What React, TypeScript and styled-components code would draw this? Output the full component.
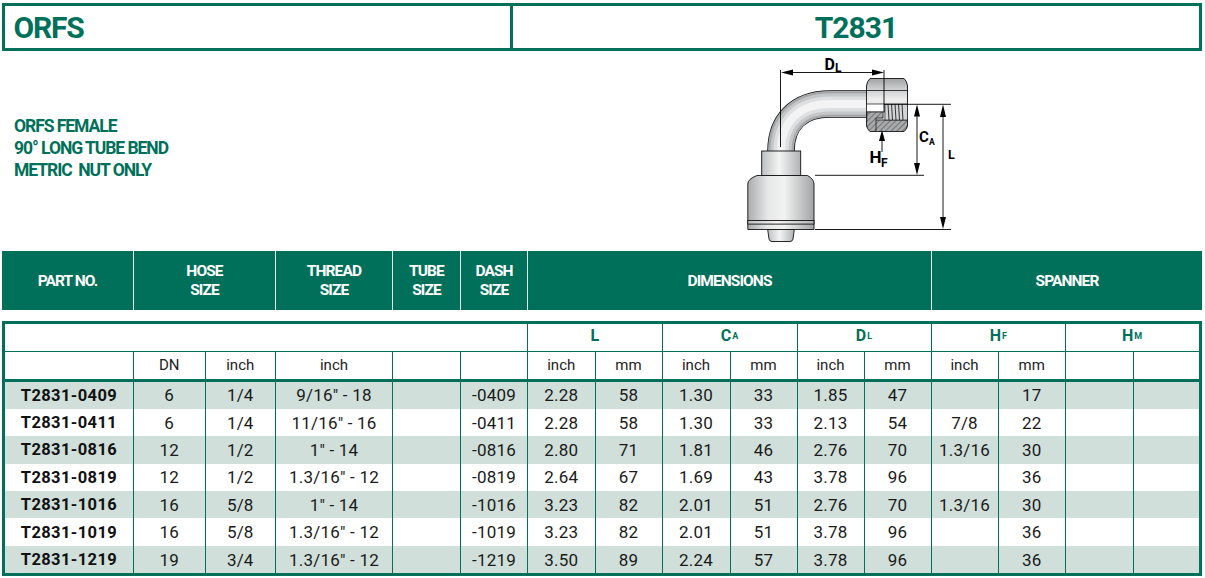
import * as React from "react";
import styled, { createGlobalStyle } from "styled-components";

const GREEN = "#00705a";
const FONT = `Roboto, "Liberation Sans", sans-serif`;

const rows = [
  ["T2831-0409", "6", "1/4", '9/16" - 18', "", "-0409", "2.28", "58", "1.30", "33", "1.85", "47", "", "17", "", ""],
  ["T2831-0411", "6", "1/4", '11/16" - 16', "", "-0411", "2.28", "58", "1.30", "33", "2.13", "54", "7/8", "22", "", ""],
  ["T2831-0816", "12", "1/2", '1" - 14', "", "-0816", "2.80", "71", "1.81", "46", "2.76", "70", "1.3/16", "30", "", ""],
  ["T2831-0819", "12", "1/2", '1.3/16" - 12', "", "-0819", "2.64", "67", "1.69", "43", "3.78", "96", "", "36", "", ""],
  ["T2831-1016", "16", "5/8", '1" - 14', "", "-1016", "3.23", "82", "2.01", "51", "2.76", "70", "1.3/16", "30", "", ""],
  ["T2831-1019", "16", "5/8", '1.3/16" - 12', "", "-1019", "3.23", "82", "2.01", "51", "3.78", "96", "", "36", "", ""],
  ["T2831-1219", "19", "3/4", '1.3/16" - 12', "", "-1219", "3.50", "89", "2.24", "57", "3.78", "96", "", "36", "", ""],
];

const units = ["", "DN", "inch", "inch", "", "", "inch", "mm", "inch", "mm", "inch", "mm", "inch", "mm", "", ""];

const TUBE = "M167 54H130C97 54 81 74 81 101";

const FittingDrawing = () => (
  <svg width="280" height="200" viewBox="0 0 280 200">
    <defs>
      <linearGradient id="body" x1="0" x2="1" y1="0" y2="0">
        <stop offset="0" stopColor="#a9abad" />
        <stop offset="0.3" stopColor="#e6e7e8" />
        <stop offset="0.55" stopColor="#f2f2f2" />
        <stop offset="1" stopColor="#a2a4a6" />
      </linearGradient>
      <linearGradient id="collar" x1="0" x2="1" y1="0" y2="0">
        <stop offset="0" stopColor="#bcbec0" />
        <stop offset="0.45" stopColor="#f4f4f4" />
        <stop offset="1" stopColor="#b0b2b4" />
      </linearGradient>
      <linearGradient id="nut" x1="0" x2="0" y1="0" y2="1">
        <stop offset="0" stopColor="#a0a2a4" />
        <stop offset="0.18" stopColor="#c8cacb" />
        <stop offset="0.4" stopColor="#eeeeee" />
        <stop offset="1" stopColor="#b8babc" />
      </linearGradient>
      <pattern id="hatch" width="4" height="4" patternUnits="userSpaceOnUse" patternTransform="rotate(45)">
        <rect width="4" height="4" fill="#a8aaac" />
        <line x1="0" y1="0" x2="0" y2="4" stroke="#222" strokeWidth="0.8" />
      </pattern>
    </defs>

    {/* bent tube, shaded with nested strokes */}
    <path d={TUBE} fill="none" stroke="#111" strokeWidth="27.5" />
    <path d={TUBE} fill="none" stroke="#a6a8aa" strokeWidth="26" />
    <path d={TUBE} fill="none" stroke="#c4c6c7" strokeWidth="21" />
    <path d={TUBE} fill="none" stroke="#dedfe0" strokeWidth="15" />
    <path d={TUBE} fill="none" stroke="#f3f3f3" strokeWidth="8" />

    {/* collar and socket */}
    <rect x="61.7" y="101" width="39" height="24.5" fill="url(#collar)" stroke="#111" strokeWidth="0.9" />
    <path d="M57 125.5H107.5Q114 129 114 134V179.5H47.8V134Q47.8 129 57 125.5Z" fill="url(#body)" stroke="#111" strokeWidth="0.9" />
    <rect x="47.8" y="170.5" width="66.2" height="3.6" fill="url(#collar)" stroke="#111" strokeWidth="0.9" />
    <path d="M67.7 179.5H94.3L93 189Q92.5 191.5 90 191.5H72Q69.5 191.5 69 189Z" fill="url(#collar)" stroke="#111" strokeWidth="0.9" />

    {/* nut */}
    <path d="M170 28.5H204Q207 31 207.5 36V75Q207 79 204 81.5H170Q167 79 166.5 75V36Q167 31 170 28.5Z" fill="url(#nut)" stroke="#111" strokeWidth="0.9" />
    <path d="M166.5 40.5H207.5" stroke="#111" strokeWidth="0.8" />
    <path d="M166.5 54H185V62H166.5Z" fill="#fff" stroke="#111" strokeWidth="0.7" />
    <path d="M167 62H183V68H176V70.5H185V81.5H170Q167 79 166.5 75Z" fill="url(#hatch)" stroke="#111" strokeWidth="0.7" />
    <path d="M176 70H207.5V75Q207 79 204 81.5H176Z" fill="url(#hatch)" stroke="#111" strokeWidth="0.7" />
    <path d="M185 54H207.5V70H185Z" fill="#d2d4d5" stroke="#111" strokeWidth="0.6" />
    <path d="M188 54L189 70M191.5 54L192.5 70M195 54L196 70M198.5 54L199.5 70M202 54L203 70" stroke="#222" strokeWidth="0.9" />

    {/* dimension lines */}
    <g stroke="#000" strokeWidth="0.9" fill="none">
      <path d="M80.5 20V97M184 20V62M92 22.5H172" />
      <path d="M184 54.3H251M115 125.3H224M115 179.5H251" />
      <path d="M217 66V114M243 66V168M182 90V102" />
    </g>
    <g fill="#000">
      <path d="M81 22.5L93 19.5V25.5Z" />
      <path d="M184 22.5L172 19.5V25.5Z" />
      <path d="M217 54.5L214 66.5H220Z" />
      <path d="M217 125L214 113H220Z" />
      <path d="M243 54.5L240 67H246Z" />
      <path d="M243 179L240 167H246Z" />
      <path d="M182 80L179 91H185Z" />
    </g>
    <DrawLabel x="124.5" y="19.5" fontSize="16">D</DrawLabel>
    <DrawLabel x="135" y="21.5" fontSize="12">L</DrawLabel>
    <DrawLabel x="219" y="92" fontSize="15">C</DrawLabel>
    <DrawLabel x="229" y="95" fontSize="8.5">A</DrawLabel>
    <DrawLabel x="248" y="109" fontSize="12.5">L</DrawLabel>
    <DrawLabel x="169.5" y="113" fontSize="17">H</DrawLabel>
    <DrawLabel x="181" y="116.5" fontSize="12">F</DrawLabel>
  </svg>
);

const App = () => (
  <Page>
    <GlobalStyle />
    <TitleBar>
      <SeriesName>ORFS</SeriesName>
      <PartName>T2831</PartName>
    </TitleBar>

    <Intro>
      <Description>
        ORFS FEMALE
        <br />
        90° LONG TUBE BEND
        <br />
        METRIC&nbsp; NUT ONLY
      </Description>
      <Figure>
        <FittingDrawing />
      </Figure>
    </Intro>

    <HeaderBand>
      <HeaderCell>PART NO.</HeaderCell>
      <HeaderCell>HOSE<br />SIZE</HeaderCell>
      <HeaderCell>THREAD<br />SIZE</HeaderCell>
      <HeaderCell>TUBE<br />SIZE</HeaderCell>
      <HeaderCell>DASH<br />SIZE</HeaderCell>
      <HeaderCell>DIMENSIONS</HeaderCell>
      <HeaderCell>SPANNER</HeaderCell>
    </HeaderBand>

    <DataBox>
      <Row>
        <Cell $span={6} />
        <GroupCell>L</GroupCell>
        <GroupCell>C<sub>A</sub></GroupCell>
        <GroupCell>D<sub>L</sub></GroupCell>
        <GroupCell>H<sub>F</sub></GroupCell>
        <GroupCell>H<sub>M</sub></GroupCell>
      </Row>
      <UnitRow>
        {units.map((unit, i) => (
          <Cell key={i}>{unit}</Cell>
        ))}
      </UnitRow>
      {rows.map((row, r) => (
        <DataRow key={row[0]} $striped={r % 2 === 0}>
          {row.map((value, i) =>
            i === 0 ? <PartCell key={i}>{value}</PartCell> : <Cell key={i}>{value}</Cell>
          )}
        </DataRow>
      ))}
    </DataBox>
  </Page>
);

const GlobalStyle = createGlobalStyle`
  html, body {
    margin: 0;
    background: #fff;
  }
`;

const Page = styled.div`
  width: 1205px;
  height: 578px;
  box-sizing: border-box;
  padding: 2.5px 3px 0 2px;
  overflow: hidden;
  font-family: ${FONT};
`;

const TitleBar = styled.div`
  display: grid;
  grid-template-columns: 505px 1fr;
  height: 48.5px;
  box-sizing: border-box;
  border: 3.5px solid ${GREEN};
  color: ${GREEN};
  font-size: 30px;
  font-weight: 700;
`;

const SeriesName = styled.div`
  display: flex;
  align-items: center;
  padding: 2px 0 0 8.5px;
  letter-spacing: -1.2px;
`;

const PartName = styled.div`
  display: flex;
  align-items: center;
  justify-content: center;
  padding-top: 2px;
  border-left: 3px solid ${GREEN};
  letter-spacing: -1px;
`;

const Intro = styled.div`
  display: flex;
  height: 199.5px;
`;

const Description = styled.div`
  width: 698px;
  box-sizing: border-box;
  padding: 64px 0 0 12px;
  color: ${GREEN};
  font-size: 17.5px;
  font-weight: 700;
  line-height: 22px;
  letter-spacing: -1.05px;
`;

const Figure = styled.div`
  flex: none;
  height: 200px;
  margin-top: -1px;
`;

const DrawLabel = styled.text`
  font-family: ${FONT};
  font-weight: 700;
  fill: #000;
`;

const HeaderBand = styled.div`
  display: grid;
  grid-template-columns: 131px 142px 117px 68px 67px 404px 271px;
  height: 59px;
  background: ${GREEN};
`;

const HeaderCell = styled.div`
  display: flex;
  align-items: center;
  justify-content: center;
  padding-top: 2px;
  text-align: center;
  border-left: 1px solid #e4eeea;
  color: #fff;
  font-size: 15.5px;
  font-weight: 700;
  line-height: 19px;
  letter-spacing: -0.9px;

  &:first-child {
    border-left: 0;
  }
`;

const DataBox = styled.div`
  margin-top: 11.5px;
  border: 3.5px solid ${GREEN};
  border-bottom-width: 3px;
`;

const columns =
  "128px 71.5px 70.5px 117px 68px 67px 67.5px 67px 68px 67px 67px 67px 67px 67.5px 67.5px 65.5px";

const Row = styled.div`
  display: grid;
  grid-template-columns: ${columns};
  height: 27.5px;
  border-bottom: 1px solid ${GREEN};
  box-sizing: border-box;
`;

const UnitRow = styled(Row)`
  height: 30px;
  border-bottom-width: 3px;
  font-size: 15px;
  color: #222;
`;

const DataRow = styled(Row)<{ $striped: boolean }>`
  height: 27.4px;
  border-bottom: 0;
  background: ${(p) => (p.$striped ? "#d0dfd9" : "#fff")};
  font-size: 17px;
  letter-spacing: 0.2px;
  color: #1a1a1a;
`;

const Cell = styled.div<{ $span?: number }>`
  grid-column: span ${(p) => p.$span ?? 1};
  display: flex;
  align-items: center;
  justify-content: center;
  border-left: 1px solid ${GREEN};
  white-space: nowrap;

  &:first-child {
    border-left: 0;
  }
`;

const GroupCell = styled(Cell)`
  grid-column: span 2;
  padding-bottom: 3px;
  color: ${GREEN};
  font-size: 16px;
  font-weight: 700;

  sub {
    margin-left: 1px;
    font-size: 9px;
    line-height: 0;
    vertical-align: -6px;
  }
`;

const PartCell = styled(Cell)`
  font-size: 16.5px;
  font-weight: 700;
  letter-spacing: 0.4px;
  color: #111;
`;

export default App;
